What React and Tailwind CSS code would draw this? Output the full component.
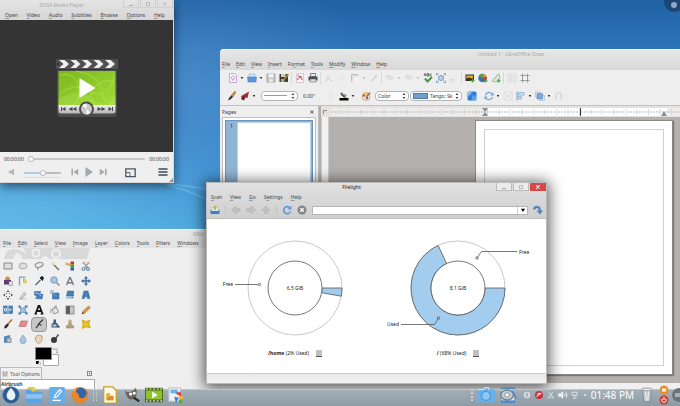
import React from 'react';
import clsx from 'clsx';

const mediaMenu = ['Open', 'Video', 'Audio', 'Subtitles', 'Browse', 'Options', 'Help'];
const drawMenu = ['File', 'Edit', 'View', 'Insert', 'Fo|rmat', 'Tools', 'Modify', 'Window', 'Help'];
const gimpMenu = ['File', 'Edit', 'Select', 'View', 'Image', 'Layer', 'Colors', 'Tools', 'Filters', 'Windows'];
const filelightMenu = ['Scan', 'View', 'Go', 'S|ettings', 'Help'];

// "Fo|rmat" puts the mnemonic on the letter after the bar, otherwise it is the first one
const MenuBar = ({ items, className }) => (
  <nav className={clsx('flex items-center whitespace-nowrap text-[#444]', className)}>
    {items.map((item) => {
      const [before, after] = item.includes('|') ? item.split('|') : ['', item];
      return (
        <button key={item} type="button">
          {before}
          <span className="underline decoration-[#999]">{after[0]}</span>
          {after.slice(1)}
        </button>
      );
    })}
  </nav>
);

const WindowButtons = ({ active }) => (
  <div className="flex h-2 shrink-0 gap-px">
    <button type="button" aria-label="Minimize" className={clsx('flex w-4 items-end justify-center border border-t-0 pb-px', active ? 'border-[#bbb] bg-[#ececec]' : 'border-[#d0d0d0]')}>
      <span className="h-px w-1 bg-[#aaa]" />
    </button>
    <button type="button" aria-label="Maximize" className={clsx('flex w-4 items-center justify-center border border-t-0', active ? 'border-[#bbb] bg-[#ececec]' : 'border-[#d0d0d0]')}>
      <span className="h-1 w-1 border border-[#bbb]" />
    </button>
    <button type="button" aria-label="Close" className={clsx('flex w-4 items-center justify-center', active ? 'bg-[#d9474b] text-white' : 'border border-t-0 border-[#d0d0d0] text-[#c4c4c4]')}>
      <svg viewBox="0 0 6 6" className="h-1 w-1" stroke="currentColor" strokeWidth="1.6"><path d="M.5.5l5 5M5.5.5l-5 5" /></svg>
    </button>
  </div>
);

const Icon = ({ children, className = 'h-[10px] w-[10px]' }) => (
  <svg viewBox="0 0 20 20" fill="none" className={clsx('shrink-0', className)}>{children}</svg>
);

/* ---------- Media player ---------- */

const PlayerLogo = () => (
  <svg viewBox="0 0 62 58" className="h-[58px] w-[62px]">
    <defs>
      <linearGradient id="lime" x1="0" y1="0" x2="1" y2="1">
        <stop offset="0" stopColor="#7fb81c" />
        <stop offset=".5" stopColor="#8cc92a" />
        <stop offset="1" stopColor="#a5dc3c" />
      </linearGradient>
      <linearGradient id="strip" x1="0" y1="0" x2="0" y2="1">
        <stop offset="0" stopColor="#f2f2f2" />
        <stop offset="1" stopColor="#b4b4b4" />
      </linearGradient>
    </defs>
    <rect x="0" y="0" width="62" height="10" rx="1" fill="#505050" />
    {[3, 14.5, 26, 37.5, 49].map((x) => (
      <path key={x} d={`M${x} 1h5.500l4.500 4-4.500 4h-5.500l4.500-4z`} fill="#f0f0f0" />
    ))}
    <circle cx="2" cy="5" r="1" fill="#222" />
    <path d="M1 11h60v44q0 3-3 3H4q-3 0-3-3z" fill="#4b4b4b" />
    <rect x="2.500" y="12" width="57" height="35" fill="url(#lime)" />
    <path d="M3 16q18-4 20 14t-14 17M20 12q24 4 26 20t13 10M3 36q14-14 30-4t26-14M36 46q-4-16 8-22t15 2" stroke="#b7e45b" strokeOpacity=".6" fill="none" />
    <path d="M2.500 40q20-12 34 0t23-4v11h-57z" fill="#b4e257" opacity=".35" />
    <path d="M23.500 19v20l16-10z" fill="#fff" />
    <path d="M2.500 46h57v6q0 2.500-2.500 2.500H5q-2.500 0-2.500-2.500z" fill="url(#strip)" />
    <g fill="#444">
      <path d="M5 48h1v4H5zM9.500 48v4l-3.500-2zM16.500 48v4l-4-2zM20.500 48v4l-4-2z" />
      <path d="M41.500 48v4l4-2zM45.500 48v4l4-2zM52.500 48v4l3.500-2zM56 48h1v4h-1z" />
    </g>
    <circle cx="30.500" cy="50" r="7.500" fill="#4b4b4b" />
    <circle cx="30.500" cy="50" r="5.500" fill="#c9c9c9" />
    <path d="M30.500 50l-4-3.800a5.500 5.500 0 0 1 4-1.700zM30.500 50l4 3.800a5.500 5.500 0 0 1-4 1.700z" fill="#fafafa" />
  </svg>
);

const rangeClass =
  'm-0 h-[6px] min-w-0 appearance-none bg-transparent [&::-webkit-slider-runnable-track]:h-[2px] [&::-webkit-slider-runnable-track]:rounded-full [&::-webkit-slider-thumb]:-mt-[2px] [&::-webkit-slider-thumb]:h-[6px] [&::-webkit-slider-thumb]:w-[6px] [&::-webkit-slider-thumb]:appearance-none [&::-webkit-slider-thumb]:rounded-full [&::-webkit-slider-thumb]:border [&::-webkit-slider-thumb]:border-[#b5b5b5] [&::-webkit-slider-thumb]:bg-white';

const MediaPlayer = () => (
  <section className="absolute top-0 left-0 flex h-[183px] w-[174px] flex-col border-r border-b border-[#d5d5d5] bg-[#efefef] shadow-[0_3px_10px_rgba(0,0,0,0.55)]">
    <header className="bg-gradient-to-b from-[#e4e4e4] to-[#d6d6d6]">
      <div className="flex h-[10px] justify-between">
        <h2 className="flex-1 pt-px text-center text-[#aaa]">ROSA Media Player</h2>
        <WindowButtons />
      </div>
      <MenuBar items={mediaMenu} className="h-[10px] justify-between pr-2 pl-[5px]" />
    </header>
    <div className="flex flex-1 items-center justify-center bg-[#343434] pt-1">
      <PlayerLogo />
    </div>
    <footer className="flex h-[30px] flex-col text-[#444]">
      <div className="flex h-[14px] items-center gap-1 px-1">
        <span>00:00:00</span>
        <input type="range" aria-label="Position" defaultValue="0" className={clsx(rangeClass, 'flex-1 [&::-webkit-slider-runnable-track]:bg-[#c6c6c6]')} />
        <span>00:00:00</span>
      </div>
      <div className="flex h-3 items-center pr-[5px] pl-2">
        <button type="button" aria-label="Mute">
          <Icon className="h-2 w-2"><path d="M2 7h5l8-6v18l-8-6H2z" fill="#b4b8bb" /></Icon>
        </button>
        <div className="ml-2 flex w-[37px] flex-col pt-[3px]">
          <input type="range" aria-label="Volume" defaultValue="50" className={clsx(rangeClass, 'w-full [&::-webkit-slider-runnable-track]:bg-linear-to-r [&::-webkit-slider-runnable-track]:from-[#a9cfe6] [&::-webkit-slider-runnable-track]:from-50% [&::-webkit-slider-runnable-track]:to-[#bbb] [&::-webkit-slider-runnable-track]:to-50%')} />
          <span className="mx-px border-b border-dotted border-[#ccc] pt-px" />
        </div>
        <div className="ml-[10px] flex items-center gap-[5px] text-[#a3a8ad]">
          <button type="button" aria-label="Previous"><Icon className="h-2 w-2"><path d="M1 2h4v16H1zM18 2v16L6 10z" fill="currentColor" /></Icon></button>
          <button type="button" aria-label="Play"><Icon><path d="M3 0v20l15-10z" fill="currentColor" /></Icon></button>
          <button type="button" aria-label="Next"><Icon className="h-2 w-2"><path d="M15 2h4v16h-4zM2 2v16l12-8z" fill="currentColor" /></Icon></button>
        </div>
        <button type="button" aria-label="Playlist" className="ml-[18px]">
          <Icon className="h-[11px] w-[11px]"><path d="M1.500 3.500h17v14h-17z" stroke="#4b5763" strokeWidth="2.400" /><path d="M2 10h7v8" stroke="#4b5763" strokeWidth="1.600" /></Icon>
        </button>
        <button type="button" aria-label="Menu" className="ml-auto">
          <Icon><path d="M1 4h18M1 10h18M1 16h18" stroke="#3f4b58" strokeWidth="3" /></Icon>
        </button>
      </div>
      <Icon className="h-1 w-1 self-end"><path d="M20 0v20H0z" fill="#8b9296" /></Icon>
    </footer>
  </section>
);

/* ---------- LibreOffice Draw ---------- */

const glyphs = {
  doc: <><path d="M3 1h10l4 4v14H3z" fill="#faf7fd" stroke="#b593cf" strokeWidth="1.500" /><path d="M6 9l4-4 4 4-4 6z" stroke="#a177c4" strokeWidth="1.500" /></>,
  folder: <><path d="M4 2h12v9H4z" fill="#d5e6f7" stroke="#6f9fd2" /><path d="M1 8h18l-1 10H2z" fill="#5a97dd" stroke="#3f79bf" /></>,
  save: <><path d="M2 2h16v16H2z" fill="#c4c4c4" stroke="#999" strokeWidth="1.500" /><path d="M5 2h10v7H5z" fill="#f2f2f2" /><path d="M6 12h8v6H6z" fill="#e6e6e6" /></>,
  saveAs: <><path d="M1 2h17v16H1z" fill="#3c3c3c" /><path d="M4 2h9v6H4z" fill="#d5cfae" /><path d="M4 12h7v6H4z" fill="#aaa" /><path d="M18 1L8 13l-2 4 4-2L20 4z" fill="#a98b3d" /></>,
  pdf: <><path d="M3 1h14v18H3z" fill="#fbf3f3" stroke="#c5a5a5" /><path d="M5 5c6 2 9 5 9 9M14 8c-5-1-8 2-9 6" stroke="#cc3344" strokeWidth="2" /></>,
  print: <><path d="M5 1h10v6H5z" fill="#eee" stroke="#555" strokeWidth="1.500" /><path d="M1 7h18v8H1z" fill="#4c4f52" /><path d="M4 12h12v6H4z" fill="#ddd" stroke="#555" /></>,
  cut: <path d="M4 14l8-8M12 14L5 7M3 15h3M12 15h4" stroke="#d0d0d0" strokeWidth="2" />,
  copy: <path d="M5 4h8v10H5z" stroke="#e4e4e4" strokeWidth="1.500" />,
  paste: <><path d="M3 3h12v14H3z" fill="#e2e2e2" /><path d="M3 17V3h12v3" stroke="#bdbdbd" strokeWidth="2" /><path d="M8 8h9v10H8z" fill="#f3f3f3" /></>,
  brush: <path d="M16 3l-6 8-5 6" stroke="#d2d2d2" strokeWidth="3" />,
  undo: <path d="M3 12V6h6M4 7q12-4 13 6M8 6v8M12 6v8" stroke="#d3d3d3" strokeWidth="1.800" />,
  spell: <><path d="M2 6l2-5 2 5M8 1v5h3V1zM17 2h-3v4h3" stroke="#333" strokeWidth="1.400" /><path d="M4 11l5 6 9-9" stroke="#419b3c" strokeWidth="4" /></>,
  zoom: <><path d="M3 3l14 14M17 3L3 17" stroke="#9db4cc" strokeWidth="1.500" /><circle cx="10" cy="10" r="5" fill="#b9d3ed" stroke="#5c86b4" strokeWidth="1.500" /><path d="M1 5V1h4M15 1h4v4M19 15v4h-4M5 19H1v-4" stroke="#5c86b4" strokeWidth="1.500" /></>,
  stamp: <path d="M3 17h7v-4H3zM13 5l3 3" stroke="#d6d6d6" strokeWidth="2" />,
  image: <><path d="M1 3h17v13H1z" fill="#33312d" /><path d="M3 5h13v6H3z" fill="#efab28" /><path d="M3 13l5-5 4 4 3-2 2 4z" fill="#46331d" /><path d="M15 11v8M11 15h8" stroke="#46a136" strokeWidth="2.500" /></>,
  chart: <><circle cx="9" cy="10" r="8.500" fill="#3d6fae" /><path d="M9 10V1.500a8.500 8.500 0 0 1 8 6z" fill="#e09428" /><path d="M9 10l8-2.500a8.500 8.500 0 0 1-3 9.500z" fill="#c43b28" /><path d="M9 10l-8-3a8.500 8.500 0 0 1 8-5.500z" fill="#57a13d" /><path d="M15 12v7M12 15.500h7" stroke="#46a136" strokeWidth="2.500" /></>,
  gallery: <><path d="M2 16q2-6 8-6-2-6 6-8l2 9-8 7z" fill="#e4ece0" stroke="#8aa384" strokeWidth="1.500" /><path d="M15 12v7M12 15.500h7" stroke="#46a136" strokeWidth="2.500" /></>,
  grid: <path d="M1 2h18M1 6h18M1 10h18M1 14h18M1 18h18" stroke="#aaa" strokeWidth="1.500" strokeDasharray="1.500 2.500" />,
  guides: <path d="M5 1v18M15 1v18M1 5h18M1 15h18" stroke="#8b8b8b" strokeWidth="1.600" />,
  lineBrush: <><path d="M18 2l-3-1-7 8 4 3z" fill="#c49a3d" stroke="#7a5f28" /><path d="M8 9l4 3-5 5-5 2 2-5z" fill="#383838" /></>,
  redArrow: <><path d="M1 11L18 1l-3 13z" fill="#a62a30" /><path d="M4 11l7 1-3 7-6-3z" fill="#732025" /></>,
  dots: <path d="M8 3v2M8 9v2M8 15v2M12 3v2M12 9v2M12 15v2" stroke="#c9c9c9" strokeWidth="2" />,
  lineColor: <><path d="M4 2l11 7-4 5L3 7z" fill="#4f4f55" /><path d="M4 2l9 9" stroke="#e1c64f" strokeWidth="2" /><path d="M1 14h18v5H1z" fill="#050505" /><path d="M12 10l4 3h-8z" fill="#58a85c" /></>,
  palette: <><circle cx="10" cy="11" r="8" fill="#eee2cf" stroke="#c59f62" strokeWidth="1.500" /><circle cx="6" cy="9" r="2.500" fill="#d64a38" /><circle cx="12" cy="14" r="2.500" fill="#4b7bc1" /><circle cx="12" cy="6" r="2" fill="#e8b33b" /><path d="M18 3l-7 9" stroke="#a3623a" strokeWidth="2.500" /></>,
  shadow: <><rect x="1" y="1" width="18" height="18" rx="3" fill="#2e7ddb" /><path d="M2 2h9l-9 10z" fill="#8cc2f6" /><path d="M10 9h8v9h-8z" fill="#599fe9" /></>,
  rotate: <><path d="M3 9a7.500 7.500 0 0 1 14-2M17 12a7.500 7.500 0 0 1-14 1" stroke="#5f9ede" strokeWidth="2.200" /><path d="M19 3v6h-6zM1 17v-6h6z" fill="#5f9ede" /></>,
  group: <path d="M3 3l14 14M17 3L3 17M2 2h16v16H2z" stroke="#dadada" strokeWidth="1.800" />,
  align: <><path d="M2 1v18" stroke="#88a5c7" strokeWidth="2" /><path d="M4 3h12v5H4zM4 11h7v5H4z" fill="#d8e6f5" stroke="#7da3cf" strokeWidth="1.500" /></>,
  arrange: <><path d="M1 2h10v10H1z" fill="#e1e9f4" stroke="#8aa6cc" /><path d="M9 9h10v10H9z" fill="#e1e9f4" stroke="#8aa6cc" /><path d="M4 5h11v11H4z" fill="#78a8e0" stroke="#5581b8" /></>,
  glue: <path d="M4 18V8q0-5 5-5t5 5v10" stroke="#d8d8d8" strokeWidth="3" />,
};

const Tool = ({ name }) => (
  <button type="button" aria-label={name} className="flex w-[13px] shrink-0 justify-center">
    <Icon>{glyphs[name]}</Icon>
  </button>
);

const Caret = ({ faded }) => (
  <svg viewBox="0 0 6 6" className="h-1 w-[6px] shrink-0" fill={faded ? '#bbb' : '#333'}><path d="M1 1.500h4L3 5z" /></svg>
);

const Sep = () => <span className="mx-px h-3 w-px shrink-0 bg-[#d8d8d8]" />;

const Spin = () => (
  <svg viewBox="0 0 6 12" className="pointer-events-none h-2 w-1 shrink-0" fill="#333"><path d="M1 4.500h4L3 1.500zM1 7.500h4l-2 3z" /></svg>
);

const boxClass = 'flex h-[10px] shrink-0 items-center rounded-sm border border-[#b5b5b5] bg-white px-[2px] text-[#333]';

const Ruler = () => (
  <div className="flex h-[11px] items-center bg-[#e3e2e1] py-px pl-[2px]">
    <span className="mr-1 h-1 w-1 border-t border-l border-[#888]" />
    <svg className="h-2 flex-1" preserveAspectRatio="none">
      <defs>
        <pattern id="ticks" width="23" height="8" patternUnits="userSpaceOnUse" x="18">
          <path d="M0 1v6M3 3v2M6 3v2M9 3v2M12 2v4M15 3v2M18 3v2M21 3v2" stroke="#b8b8b8" strokeWidth="1" />
        </pattern>
      </defs>
      <rect width="100%" height="8" fill="#eeedec" />
      <rect x="157" width="179" height="8" fill="#fff" />
      <rect width="100%" height="8" fill="url(#ticks)" />
      <path d="M151 0h6l-3 4 3 4h-6l3-4zM330 8l3-5 3 5z" fill="#8d8d8d" />
      <path d="M249.500 0v8" stroke="#333" />
    </svg>
  </div>
);

const DrawWindow = () => (
  <section className="absolute top-[49px] right-0 bottom-0 left-[220px] flex flex-col overflow-hidden rounded-tl-sm bg-[#eeeeee]">
    <header className="border-t border-[#f5f5f5] bg-gradient-to-b from-[#e6e6e6] to-[#d8d8d8]">
      <h2 className="h-2 pl-[122px] text-center text-[#aaa]">Untitled 1 - LibreOffice Draw</h2>
      <MenuBar items={drawMenu} className="h-3 gap-[6px] pl-[2px]" />
    </header>
    <div className="flex h-4 items-center pl-[6px]">
      <Tool name="doc" /><Caret /><Tool name="folder" /><Caret /><Tool name="save" /><Tool name="saveAs" /><Sep />
      <Tool name="pdf" /><Tool name="print" /><Sep />
      <Tool name="cut" /><Tool name="copy" /><Tool name="paste" /><Caret faded /><Tool name="brush" /><Sep />
      <Tool name="undo" /><Caret faded /><Tool name="undo" /><Caret faded />
      <Tool name="spell" /><Tool name="zoom" /><Tool name="stamp" /><Sep />
      <Tool name="image" /><Tool name="chart" /><Tool name="gallery" /><Sep />
      <Tool name="grid" /><Tool name="guides" />
    </div>
    <div className="flex h-[19px] items-center pl-[5px]">
      <Tool name="lineBrush" /><Tool name="redArrow" /><Caret />
      <button type="button" aria-label="Line style" className={clsx(boxClass, 'ml-1 w-[37px] gap-1')}>
        <span className="h-px flex-1 bg-[#999]" /><Spin />
      </button>
      <input aria-label="Line width" defaultValue={'0.00"'} className="ml-[5px] w-[21px] bg-transparent text-[#333]" />
      <Tool name="dots" /><Tool name="lineColor" /><Caret /><span className="w-[3px]" /><Tool name="palette" />
      <label className={clsx(boxClass, 'ml-[3px] w-[34px]')}>
        <select aria-label="Fill type" className="w-full min-w-0 appearance-none bg-transparent"><option>Color</option></select><Spin />
      </label>
      <label className={clsx(boxClass, 'ml-px w-[52px] gap-[2px]')}>
        <span className="h-[6px] w-[15px] shrink-0 border border-[#5177a3] bg-[#729fcf]" />
        <select aria-label="Fill color" className="w-full min-w-0 appearance-none bg-transparent"><option>Tango: Sk</option></select><Spin />
      </label>
      <span className="w-[3px]" /><Tool name="shadow" /><span className="w-1" />
      <Tool name="rotate" /><Caret /><Tool name="group" /><Tool name="align" /><Caret /><Tool name="arrange" /><Caret /><Tool name="glue" />
    </div>
    <div className="flex min-h-0 flex-1 border-t border-[#c3c3c3]">
      <aside className="flex w-[99px] shrink-0 flex-col border-r border-[#bbb]">
        <div className="flex h-[11px] items-center justify-between px-[2px] pr-1 text-[#333]">
          <span>Pages</span>
          <button type="button" aria-label="Close pages"><Icon className="h-1 w-1"><path d="M2 2l16 16M18 2L2 18" stroke="#333" strokeWidth="4" /></Icon></button>
        </div>
        <div className="mx-[2px] flex-1 border border-[#c0c0c0] bg-white p-[2px]">
          <div className="flex h-full gap-1 border border-[#6a94bd] bg-[#92b4d4] p-px pl-1 text-[#223]">
            <span className="w-[3px] shrink-0">1</span>
            <span className="flex-1 border border-[#bcd0e2] bg-white" />
          </div>
        </div>
      </aside>
      <div className="flex min-w-0 flex-1 flex-col bg-[#b4b0ad] pl-[2px]">
        <Ruler />
        <div className="flex flex-1">
          <div className="w-2 border-x border-[#ccc] bg-[#f2f2f2]" />
          <div className="flex flex-1 justify-end pt-[3px] pr-[7px] pb-2">
            <div className="w-[198px] border border-[#8d8986] bg-white p-2 shadow-[1px_1px_1px_#777]">
              <div className="h-full border border-[#d0d0d0]" />
            </div>
          </div>
        </div>
      </div>
    </div>
    <div className="h-[23px] shrink-0 bg-[#f0f0f0]" />
  </section>
);

/* ---------- GIMP toolbox ---------- */

const gimpTools = [
  ['Rectangle', <path d="M2 4h16v12H2z" fill="#ddd" stroke="#8a8a8a" strokeWidth="2" />],
  ['Ellipse', <ellipse cx="10" cy="10" rx="8" ry="6" fill="#ddd" stroke="#9a9a9a" strokeWidth="1.500" />],
  ['Lasso', <path d="M8 13c-10-1-6-9 3-10s10 6 1 9c-5 2-6 3-4 6" stroke="#8c8c8c" strokeWidth="2.200" />],
  ['Wand', <><path d="M8 8l10 10" stroke="#666" strokeWidth="2.500" /><path d="M6 1v9M1 6h9" stroke="#e2d79a" strokeWidth="2" /></>],
  ['By color', <><path d="M11 1h7v6h-7z" fill="#d12f28" /><path d="M11 7h7v6h-7z" fill="#37a23b" /><path d="M11 13h7v6h-7z" fill="#2c5cae" /><path d="M1 3l12 3-2 4L1 8z" fill="#e3a45d" /></>],
  ['Scissors', <><path d="M4 2l10 12M16 2L7 14" stroke="#9a9fa4" strokeWidth="2.500" /><circle cx="5" cy="16" r="3" stroke="#4f7cae" strokeWidth="2" /><circle cx="14" cy="16" r="3" stroke="#4f7cae" strokeWidth="2" /><path d="M2 5q8-6 16 0" stroke="#e3b071" /></>],
  ['Foreground', <><circle cx="9" cy="6" r="5" fill="#d88a36" /><path d="M2 8h14v9H2z" fill="#5a3b78" /><path d="M12 11h7v8h-7z" fill="#e5e5e5" stroke="#777" /></>],
  ['Paths', <><path d="M3 19V2h12" stroke="#7b9ec7" strokeWidth="2.500" /><path d="M11 5q8 2 5 9l-5-1z" fill="#ead94b" stroke="#a79628" /></>],
  ['Picker', <><path d="M3 18L13 8" stroke="#5c6a78" strokeWidth="3" /><path d="M12 4l5 5 2-6-3-2z" fill="#20252a" stroke="#20252a" strokeWidth="2" /></>],
  ['Zoom', <><path d="M13 13l6 6" stroke="#888" strokeWidth="3" /><circle cx="8" cy="8" r="6.500" fill="#a5c8e8" stroke="#7a99b5" strokeWidth="2" /></>],
  ['Measure', <path d="M10 2L3 18M10 2l7 16M5 12q5 4 10 0" stroke="#70777d" strokeWidth="2.800" />],
  ['Move', <><path d="M10 3v14M3 10h14" stroke="#3f6fa8" strokeWidth="3" /><path d="M10 0l4 5H6zM10 20l4-5H6zM0 10l5-4v8zM20 10l-5-4v8z" fill="#3f6fa8" /></>],
  ['Align', <path d="M10 0l3 4H7zM10 20l3-4H7zM0 10l4-3v6zM20 10l-4-3v6zM6 6h2v2H6zM12 6h2v2h-2zM6 12h2v2H6zM12 12h2v2h-2z" fill="#4d4d4d" />],
  ['Crop', <><path d="M4 17l8-12 4 3-8 9z" fill="#d8d8d8" stroke="#999" strokeWidth="1.500" /><path d="M2 18h14" stroke="#aaa" strokeWidth="1.500" /></>],
  ['Rotate', <><path d="M1 3h13l-3 4 7 2-2 9-13-1 3-4-5-3z" fill="#4680bd" stroke="#2f608f" /><path d="M2 6q8-2 12 6" stroke="#b9d3eb" strokeWidth="1.500" /></>],
  ['Scale', <><path d="M5 6h13v12H5z" fill="#4680bd" stroke="#2f608f" /><path d="M1 2h7M2 1v7M3 3l8 8" stroke="#7faad3" strokeWidth="2" /></>],
  ['Shear', <><path d="M5 2h12v10H3z" fill="#4680bd" stroke="#2f608f" /><path d="M2 13h10v4H2z" fill="#95b8d9" /><path d="M13 12l5 3-5 3z" fill="#4680bd" /></>],
  ['Perspective', <path d="M6 2h8l4 15h-5l-1-4H8l-1 4H2z" fill="#4680bd" stroke="#2f608f" />],
  ['Flip', <><path d="M1 2h18v15H1z" fill="#4680bd" stroke="#2f608f" /><path d="M10 2v15" stroke="#dce9f5" strokeWidth="2" /><path d="M17 9.500h-4M14.500 7l-2 2.500 2 2.500M3 7h4v5H3z" stroke="#fff" strokeWidth="1.500" /></>],
  ['Cage', <><path d="M3 3l6 4 7-5-2 8 4 7-8-3-7 4 3-8z" fill="#a9c7e5" stroke="#4f80b3" strokeWidth="1.500" /><path d="M1 1h4v4H1zM15 1h4v4h-4zM1 15h4v4H1zM15 15h4v4h-4z" fill="#4074aa" /></>],
  ['Text', <><path d="M3 18L9 2h2l6 16M6 12h8" stroke="#151515" strokeWidth="3.600" /><path d="M1 18h5M13 18h6" stroke="#151515" strokeWidth="2" /></>],
  ['Bucket', <><path d="M4 8l9-3 4 9-9 4z" fill="#e6e6e6" stroke="#777" strokeWidth="1.500" /><path d="M3 8q-3 4-1 8M9 6q0-6 5-4" stroke="#777" strokeWidth="1.500" /></>],
  ['Blend', <><path d="M2 2h8v16H2z" fill="#5c5c5c" /><path d="M10 2h8v16h-8z" fill="#c8c8c8" /><path d="M2 2h16v16H2z" stroke="#777" strokeWidth="1.500" /></>],
  ['Pencil', <><path d="M2 18l2-6L15 2l4 3L8 16z" fill="#de9a3e" stroke="#a3651f" /><path d="M2 18l1-4 3 3z" fill="#333" /></>],
  ['Brush', <><path d="M18 1L9 11" stroke="#a7703a" strokeWidth="3" /><path d="M9 9l3 3-5 6-5 1 2-6z" fill="#2f2a26" /></>],
  ['Eraser', <path d="M6 4h13l-4 11H2z" fill="#e9888e" stroke="#c46a70" strokeWidth="1.500" />],
  ['Airbrush', <><path d="M18 1L8 11M4 18l6-8 4 3" stroke="#3b3b3b" strokeWidth="2.500" /><path d="M13 10l4 1-2 2z" fill="#777" /></>],
  ['Ink', <><path d="M7 1h5v6l4 3v7H3v-7l4-3z" fill="#3f5b80" /><path d="M5 11h8v4H5z" fill="#b5cbe3" /><path d="M17 12l3 5h-5z" fill="#335" /></>],
  ['Clone', <><circle cx="10" cy="5" r="4" fill="#cbb38c" /><path d="M8 8h4l1 5h4v5H3v-5h4z" fill="#bda377" stroke="#86704a" /></>],
  ['Heal', <path d="M3 3l7 3 7-3-2 7 3 7-8-2-7 3 2-8z" fill="#edc52e" stroke="#dcb024" strokeWidth="3" strokeLinejoin="round" />],
  ['Perspective clone', <><path d="M2 5l12-3v14L2 18z" fill="#5386bd" /><path d="M8 8h8v9H8z" fill="#d2c09c" stroke="#7d95b0" strokeWidth="2" /></>],
  ['Blur', <path d="M10 2q7 8 6 12a6 5 0 0 1-12 0q0-5 6-12z" fill="#a9c6e3" stroke="#7fa0c2" strokeWidth="1.500" />],
  ['Smudge', <path d="M3 6l5-4 8 2v9l-4 5H7l-4-5z" fill="#ecd5b8" stroke="#ab8b66" strokeWidth="1.500" />],
  ['Dodge', <><path d="M11 9l6-8" stroke="#555" strokeWidth="3" /><circle cx="8" cy="12" r="6" fill="#3a3a3a" /></>],
];

const GimpWindow = () => (
  <section className="absolute top-[229px] bottom-0 left-0 flex w-[220px] flex-col border-t border-[#fafafa] bg-[#efefef]">
    <header className="bg-gradient-to-b from-[#e8e8e8] to-[#e2e2e2]">
      <h2 className="h-2 pl-[193px] whitespace-nowrap text-[#aaa]">GNU Ima</h2>
      <MenuBar items={gimpMenu} className="h-[10px] gap-[7px] pl-[3px]" />
    </header>
    <svg viewBox="0 0 90 11" className="ml-[3px] h-[11px] w-[90px] shrink-0" fill="#d9d9d9">
      <path d="M1 11Q3 0 12 1q11 1 12 10h-5q0-6-5-6-3 1-4 6z" />
      <path d="M20 0h67l-3 11H21q4-4-1-11z" />
      <circle cx="33" cy="5" r="4.500" fill="#efefef" /><circle cx="33" cy="5" r="2.500" />
      <circle cx="53" cy="6" r="5" fill="#efefef" /><circle cx="53" cy="6" r="3" />
      <path d="M38 11q4-6 8 0z" fill="#efefef" />
    </svg>
    <div className="grid h-[87px] w-[94px] shrink-0 grid-cols-6 grid-rows-6">
      {gimpTools.map(([name, drawing]) => (
        <button key={name} type="button" aria-label={name} className={clsx('flex items-center justify-center', name === 'Airbrush' && 'rounded-sm border border-[#999] bg-[#c6c6c6]')}>
          <Icon>{drawing}</Icon>
        </button>
      ))}
    </div>
    <svg viewBox="0 0 26 20" className="mt-px ml-[35px] h-5 w-[26px] shrink-0">
      <path d="M8.500 7.500h15v11h-15z" fill="#fff" stroke="#aaa" />
      <path d="M.5.500h16v12H.500z" fill="#000" stroke="#888" />
      <path d="M1 14h3v3H1z" fill="#000" /><path d="M3.500 15.500h2v2h-2z" fill="#fff" stroke="#999" strokeWidth=".5" />
      <path d="M19 2h3v4M18 3l1-2M21 5l1 1 1-1" fill="none" stroke="#aaa" />
    </svg>
    <div className="flex h-3 w-[94px] shrink-0 items-center justify-between text-[#555]">
      <button type="button" className="flex h-full items-center gap-[2px] border border-b-0 border-[#bbb] px-px whitespace-nowrap">
        <Icon className="h-[6px] w-[6px]"><path d="M4 1v18M10 1v18M16 1v18M2 6h4M8 13h4M14 5h4" stroke="#888" strokeWidth="2.500" /></Icon>
        Tool Options
      </button>
      <button type="button" aria-label="Configure tab" className="mr-[2px] flex h-[5px] w-[5px] items-center justify-center border border-[#888]">
        <span className="h-px w-px bg-[#333]" />
      </button>
    </div>
    <div className="w-[95px] flex-1 border border-[#aaa] bg-[#f2f2f2]">
      <div className="bg-white font-bold text-[#444]">Airbrush</div>
    </div>
  </section>
);

/* ---------- Filelight ---------- */

const CX = 81;
const CY = 48;

const at = (r, deg) => {
  const a = (deg * Math.PI) / 180;
  return `${CX + r * Math.cos(a)} ${CY + r * Math.sin(a)}`;
};

// ring sector, clockwise from three o'clock
const sector = (deg) => {
  const large = deg > 180 ? 1 : 0;
  return `M${at(27, 0)}L${at(47, 0)}A47 47 0 ${large} 1 ${at(47, deg)}L${at(27, deg)}A27 27 0 ${large} 0 ${at(27, 0)}z`;
};

const DiskChart = ({ size, angle, mount, used, children }) => (
  <figure className="flex w-[163px] flex-col items-center">
    <svg viewBox="0 0 163 97" className="h-[97px] w-full text-[5px]" fill="none" stroke="#555" strokeWidth=".8">
      <circle cx={CX} cy={CY} r="47" stroke="#bbb" />
      <path d={sector(angle)} fill="#a3cdee" />
      <circle cx={CX} cy={CY} r="27" fill="#fff" />
      <text x={CX} y={CY + 2} textAnchor="middle" fill="#222" stroke="none">{size}</text>
      {children}
    </svg>
    <figcaption className="mt-3 flex items-center gap-[7px] text-[#222]">
      <span><b>{mount}</b> ({used} Used)</span>
      <span className="h-[7px] w-[6px] border-b border-[#555] bg-[#c0c0c0]" />
    </figcaption>
  </figure>
);

const Filelight = () => (
  <section className="absolute top-[182px] left-[206px] flex h-[202px] w-[341px] flex-col border border-[#bbb] bg-[#eee] shadow-[0_2px_14px_2px_rgba(0,0,0,0.65)]">
    <header className="border-b border-[#bbb] bg-gradient-to-b from-[#e0e0e0] to-[#cfcfcf]">
      <div className="flex h-[9px]">
        <h2 className="flex-1 text-center text-[#222]">Filelight</h2>
        <WindowButtons active />
      </div>
      <MenuBar items={filelightMenu} className="h-[10px] gap-2 pl-1" />
      <div className="flex h-4 items-center gap-[5px] px-[3px]">
        <button type="button" aria-label="Scan folder"><Icon><path d="M1 9h18v9H1z" fill="#427cbf" /><path d="M3 7h14v5H3z" fill="#dbe8f3" /><path d="M10 0l5 6h-3v4H8V6H5z" fill="#b7c840" /></Icon></button>
        <span className="h-2 w-px bg-[#c1c1c1]" />
        <button type="button" aria-label="Back"><Icon><path d="M1 10l9-8v5h8v6h-8v5z" fill="#c2c2c2" stroke="#ababab" /></Icon></button>
        <button type="button" aria-label="Forward"><Icon><path d="M19 10l-9-8v5H2v6h8v5z" fill="#c2c2c2" stroke="#ababab" /></Icon></button>
        <button type="button" aria-label="Up"><Icon><path d="M10 2l8 9h-5v6H7v-6H2z" fill="#c2c2c2" stroke="#ababab" /></Icon></button>
        <span className="h-2 w-px bg-[#c1c1c1]" />
        <button type="button" aria-label="Rescan"><Icon><path d="M15 5a7 7 0 1 0 2 8" stroke="#5c9bdc" strokeWidth="3.500" /><path d="M19 1v8h-8z" fill="#5c9bdc" /></Icon></button>
        <button type="button" aria-label="Stop"><Icon><circle cx="10" cy="10" r="9" fill="#858585" /><path d="M6.500 6.500l7 7M13.500 6.500l-7 7" stroke="#fff" strokeWidth="2.500" /></Icon></button>
        <div className="flex h-[9px] flex-1 border border-[#b5b5b5] bg-white">
          <input aria-label="Location" className="min-w-0 flex-1" />
          <button type="button" aria-label="History" className="flex w-[10px] items-center justify-center border-l border-[#ccc]">
            <svg viewBox="0 0 6 6" className="h-1 w-1"><path d="M0 1h6L3 6z" /></svg>
          </button>
        </div>
        <button type="button" aria-label="Go"><Icon><path d="M2 9q2-6 7-5 5 1 5 8" stroke="#5383b5" strokeWidth="4.500" /><path d="M7 11h13l-6 8z" fill="#5383b5" /></Icon></button>
      </div>
    </header>
    <div className="flex flex-1 justify-center bg-white pt-[21px]">
      <DiskChart size="6.5 GiB" angle={10} mount="/home" used="2%">
        <circle cx="45.500" cy="44.500" r="1.200" />
        <path d="M21 44.500h23" />
        <text x="19" y="46" textAnchor="end" fill="#222" stroke="none">Free</text>
      </DiskChart>
      <DiskChart size="8.1 GiB" angle={245} mount="/" used="68%">
        <circle cx="100" cy="18" r="1.200" />
        <path d="M100.700 17l3.800-5.500H140" />
        <text x="142" y="13.500" fill="#222" stroke="none">Free</text>
        <circle cx="61.500" cy="78" r="1.200" />
        <path d="M61 79l-3.500 5.500H24" />
        <text x="22" y="86" textAnchor="end" fill="#222" stroke="none">Used</text>
      </DiskChart>
    </div>
    <footer className="h-[10px] border-t border-[#ccc] bg-gradient-to-b from-[#e8e8e8] to-[#f2f2f2]" />
  </section>
);

/* ---------- Taskbar ---------- */

const launchers = [
  ['Menu', <><circle cx="10" cy="10" r="9.500" fill="#2d5c92" stroke="#88a4c0" strokeWidth=".6" /><path d="M10 2q7 7 4 12-4 4-8 0-3-5 4-12z" fill="#e8f2fa" /></>],
  ['Files', <><path d="M3 1h8v7H3z" fill="#e5c94e" /><path d="M1 6q0-2 2-2h3l2 2h9q2 0 2 2v9q0 2-2 2H3q-2 0-2-2z" fill="#5ba3e2" /><path d="M1 9h18v5H1z" fill="#8ec3f0" /></>],
  ['Notes', <><rect x="1" y="1" width="18" height="18" rx="2" fill="#67afea" /><path d="M7 13l1-3 5-6 2 2-5 6zM5 16h9" stroke="#fff" strokeWidth="1.300" /></>],
  ['Firefox', <><circle cx="10" cy="10" r="9" fill="#e5762a" /><circle cx="11" cy="8" r="6" fill="#2c67ae" /><path d="M1 6q3 1 5 1l3 3q-1 4 4 4 4-1 5-6 3 10-8 11Q0 18 1 6z" fill="#e8862b" /><path d="M2 5l3-2v4z" fill="#f4b13a" /></>],
];

const tasks = [
  ['Draw', <><path d="M3 1h10l4 4v14H3z" fill="#fffbe9" stroke="#c5a32c" strokeWidth="1.500" /><path d="M6 11h8v5H6z" fill="#d78d30" /><circle cx="8" cy="10" r="2.500" fill="#e2b53b" /></>],
  ['GIMP', <><path d="M2 3q1 4 4 4 6-1 8-5 2 3 1 7 0 6-6 6-6-1-7-12z" fill="#6a645c" /><circle cx="8.500" cy="9" r="1.800" fill="#fff" /><circle cx="12.500" cy="8" r="1.600" fill="#fff" /><path d="M12 13l6 4" stroke="#2d2d2d" strokeWidth="2.500" /></>],
  ['Player', <><path d="M0 2h20v16H0z" fill="#49601e" /><path d="M1 5h18v10H1z" fill="#8ec22f" /><path d="M8 6v8l6-4z" fill="#fff" /><path d="M1 3.500h18M1 16.500h18" stroke="#dce9c2" strokeDasharray="2 2" strokeWidth="1.500" /></>],
  ['Filelight', <><path d="M2 2h13v15H2z" fill="#ecf1f6" stroke="#b3bfca" /><path d="M4 4h8v4H4z" fill="#69b1e2" /><path d="M9 8l6-2 1 6z" fill="#df4138" /><path d="M12 12l7-1-3 6z" fill="#efb92e" /><path d="M8 12l5 1-3 6z" fill="#3d79d5" /><path d="M13 15h4v4h-4z" fill="#58ad47" /></>],
];

const TaskIcon = ({ name, children }) => (
  <button type="button" aria-label={name}><Icon className="h-[18px] w-[18px]">{children}</Icon></button>
);

const Taskbar = () => (
  <footer className="absolute inset-x-0 bottom-0 flex h-[17px] items-center border-t border-[#bcc6cc] bg-gradient-to-b from-[#a3afb7] to-[#8e9ba4] pb-[6px] pl-[2px]">
    <div className="flex items-center gap-[5px]">
      {launchers.map(([name, drawing]) => <TaskIcon key={name} name={name}>{drawing}</TaskIcon>)}
    </div>
    <span className="mx-1 h-3 w-1 border-x border-dotted border-[#c9d1d6]" />
    <div className="flex items-center gap-1">
      {tasks.map(([name, drawing]) => <TaskIcon key={name} name={name}>{drawing}</TaskIcon>)}
    </div>
    <div className="ml-auto flex items-center gap-1">
      <span className="h-3 w-[2px] border-l-2 border-dotted border-[#c9d1d6]" />
      <TaskIcon name="Pictures"><path d="M0 4h5l2-3h6v3h7v14H0z" fill="#68b0e9" /><path d="M1 4h7V2h5v2" stroke="#eef5fa" /><circle cx="10" cy="11" r="5" fill="#8fc7f3" stroke="#4e98d8" strokeWidth="1.500" /></TaskIcon>
      <TaskIcon name="Disks"><path d="M2 1h16v3H2zM2 15h16v4H2z" fill="#518cc7" /><path d="M3 4h14v12H3z" fill="#dde5ec" /><ellipse cx="9" cy="10" rx="7" ry="5.500" fill="#c2ccd4" stroke="#6f7c87" strokeWidth="1.500" /><circle cx="9" cy="10" r="2.500" fill="#fff" stroke="#7e8992" /><path d="M15 5l4 9" stroke="#4f88bf" strokeWidth="2" /></TaskIcon>
    </div>
    <div className="ml-[6px] flex items-center gap-[3px] text-[#e9eef1]">
      <Icon className="h-2 w-2"><circle cx="10" cy="10" r="8" fill="#d5dce0" /><path d="M10 5v10" stroke="#8b98a0" strokeWidth="3" /></Icon>
      <Icon><circle cx="10" cy="10" r="8" fill="#c7303b" /><path d="M5 13l10-7M6 9q4-5 8-1" stroke="#fff" strokeWidth="2" /></Icon>
      <Icon className="h-2 w-2"><path d="M4 2l9 12M15 2L6 14" stroke="currentColor" strokeWidth="2" /><circle cx="5" cy="16" r="2.500" stroke="currentColor" strokeWidth="1.500" /><circle cx="14" cy="16" r="2.500" stroke="currentColor" strokeWidth="1.500" /></Icon>
      <Icon><path d="M1 7h4l5-4v14l-5-4H1zM13 7q2 3 0 6M16 4q4 6 0 12" fill="currentColor" stroke="currentColor" /></Icon>
      <Icon className="h-[10px] w-2"><path d="M3 3h12v8H3zM9 11v6M5 18h9" stroke="currentColor" strokeWidth="2" /></Icon>
      <span className="mx-[2px] h-[2px] w-[2px] rounded-full bg-current" />
      <time className="text-[10px] leading-3 whitespace-nowrap text-white">01:48 PM</time>
    </div>
    <button type="button" aria-label="Trash" className="ml-[5px]">
      <Icon className="h-4 w-4"><path d="M4 3h12l-2 15H6z" fill="#b8bfc4" stroke="#7f888e" /><path d="M8 4l1 13M12 4l-1 13" stroke="#eef1f3" strokeWidth="1.500" /><ellipse cx="10" cy="3" rx="7" ry="1.800" fill="#e7eaec" stroke="#858d93" /></Icon>
    </button>
    <div className="ml-1 flex flex-col">
      <button type="button" aria-label="Lock"><Icon><circle cx="10" cy="10" r="9" fill="#eb8d2d" /><path d="M6 7h8v6H6z" fill="#fff" /></Icon></button>
      <button type="button" aria-label="Shut down"><Icon><circle cx="10" cy="10" r="9" fill="#cf3a36" /><path d="M7 7a4.500 4.500 0 1 0 6 0M10 4v6" stroke="#fff" strokeWidth="2" /></Icon></button>
    </div>
    <button type="button" aria-label="Panel tools" className="ml-[3px] h-[14px] w-2 rounded-l-full bg-[#69737a]">
      <span className="ml-[3px] block h-1 w-[5px] bg-[#aab2b7]" />
    </button>
  </footer>
);

const Wallpaper = () => (
  <svg viewBox="0 0 680 406" preserveAspectRatio="none" className="h-full w-full" fill="none">
    <defs>
      <linearGradient id="sky" x1="0" y1="0" x2="0" y2="1">
        <stop offset="0" stopColor="#2062a4" />
        <stop offset=".12" stopColor="#2d74b8" />
        <stop offset=".4" stopColor="#3b8bce" />
        <stop offset=".6" stopColor="#4ba6de" />
        <stop offset="1" stopColor="#5db5e6" />
      </linearGradient>
      <radialGradient id="haze" cx=".25" cy=".2" r=".3">
        <stop offset="0" stopColor="#7fb0e0" stopOpacity=".3" />
        <stop offset="1" stopColor="#7fb0e0" stopOpacity="0" />
      </radialGradient>
      <radialGradient id="glow" cx="0" cy=".6" r=".4">
        <stop offset="0" stopColor="#6cc3ec" stopOpacity=".8" />
        <stop offset="1" stopColor="#6cc3ec" stopOpacity="0" />
      </radialGradient>
    </defs>
    <rect width="680" height="406" fill="url(#sky)" />
    <rect width="680" height="406" fill="url(#haze)" />
    <rect width="680" height="406" fill="url(#glow)" />
    <path d="M150 180q36 8 70 26M150 182q40 3 80 12" stroke="#a8dcf5" strokeOpacity=".3" strokeWidth="1.500" />
  </svg>
);

const App = () => (
  <main className="relative h-screen w-full overflow-hidden bg-[#2d74b8] text-[5px] leading-[8px]" style={{ fontFamily: '"Noto Sans", "Open Sans", sans-serif' }}>
    <Wallpaper />
    <button type="button" aria-label="Desktop toolbox" className="absolute -top-2 -right-1 flex h-5 w-5 items-end justify-center rounded-full bg-[#1b4573] pb-1">
      <span className="h-[6px] w-[6px] rounded-sm bg-[#8fa9c4]" />
    </button>
    <DrawWindow />
    <GimpWindow />
    <MediaPlayer />
    <Filelight />
    <Taskbar />
  </main>
);

export default App;
